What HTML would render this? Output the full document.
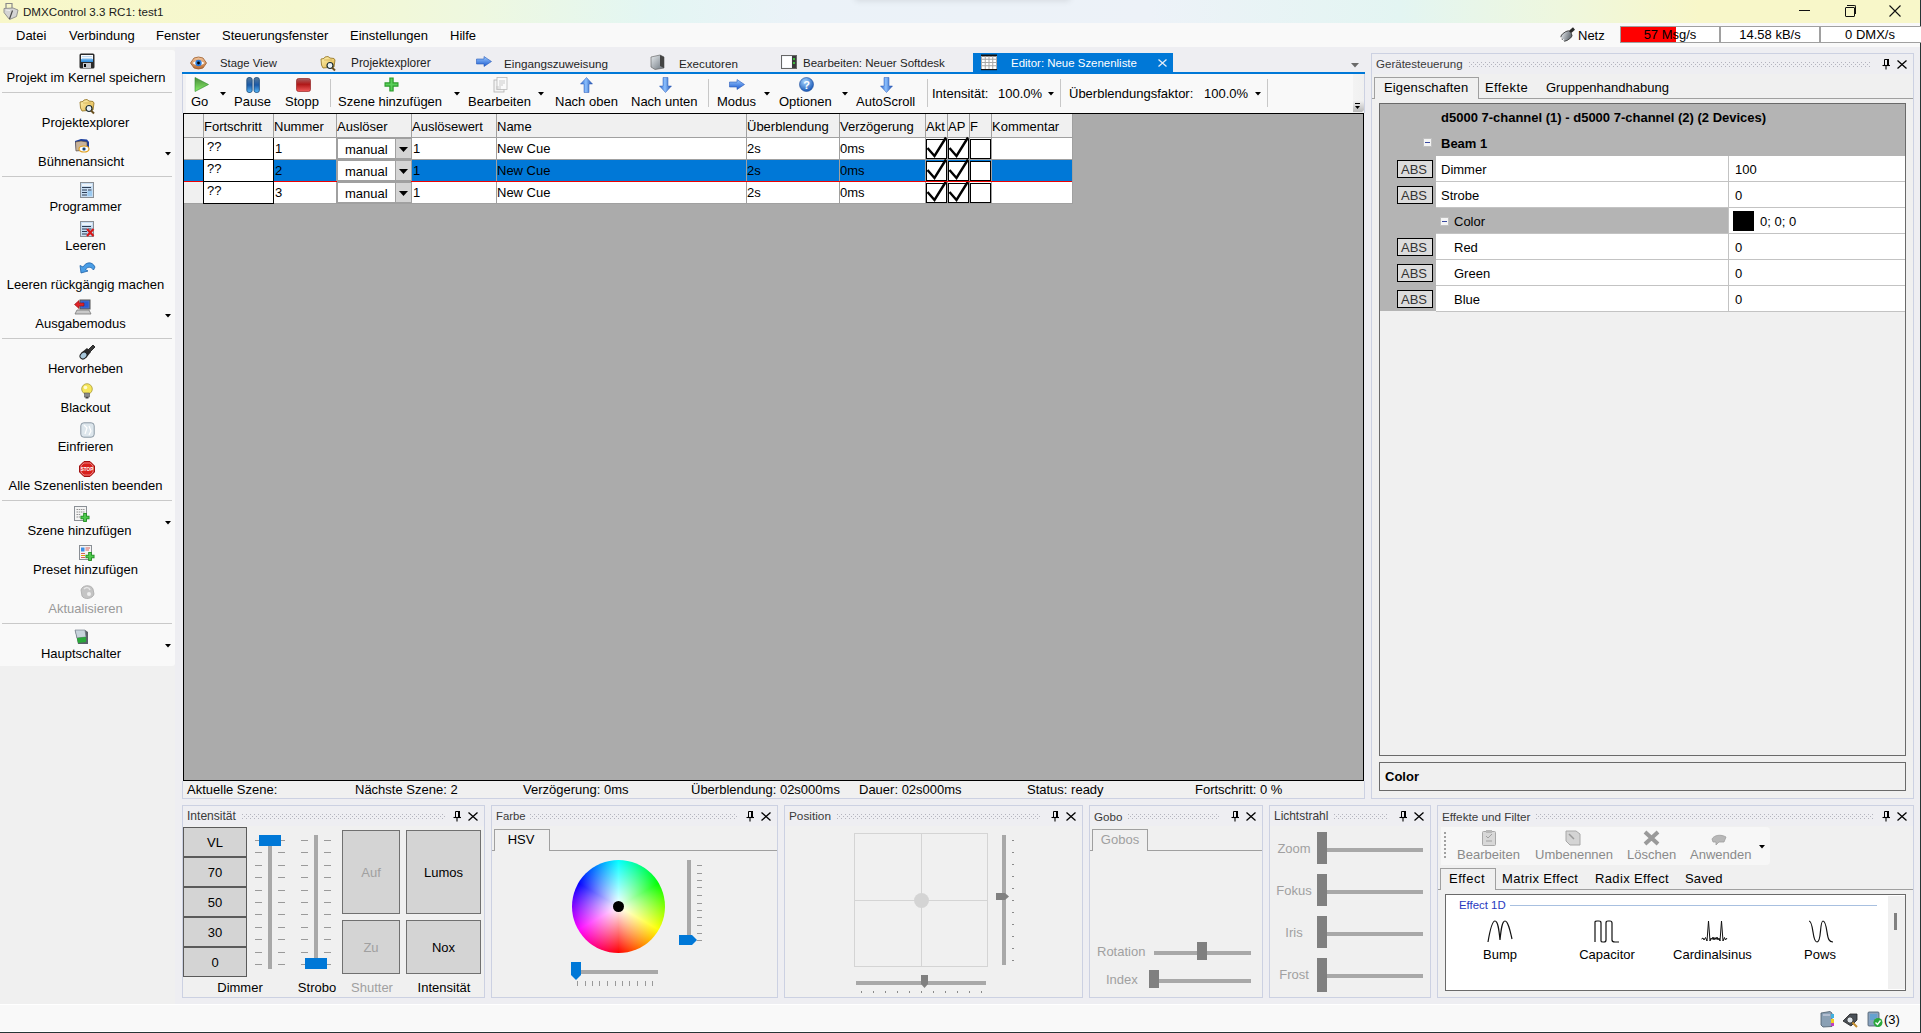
<!DOCTYPE html>
<html><head><meta charset="utf-8">
<style>
html,body{margin:0;padding:0}
body{width:1921px;height:1033px;position:relative;overflow:hidden;background:#eeeef2;font-family:"Liberation Sans",sans-serif;font-size:13px;color:#000}
.a{position:absolute}
svg.a{overflow:visible}
.t{position:absolute;white-space:nowrap;line-height:15px;font-size:13px}
.c{text-align:center}
.g{color:#a0a0a0}
</style></head>
<body>
<div class="a" style="left:0px;top:0px;width:1920px;height:23px;background:linear-gradient(90deg,#f8f7c9 0px,#f5f8d0 300px,#eef8e0 480px,#e3f6f3 650px,#ebf2f8 800px,#edf2f8 1150px,#e3f5f2 1400px,#eef7de 1560px,#f8f7c9 1700px,#f8f7c9 1921px)"></div>
<div class="a" style="left:855px;top:-12px;width:215px;height:12px;box-shadow:0 1px 6px rgba(0,0,0,0.1);background:#e8ecf0"></div>
<div class="a" style="left:0px;top:23px;width:1920px;height:24px;background:#f9f9f9"></div>
<div class="a" style="left:0px;top:47px;width:175px;height:957px;background:#f0f0f0"></div>
<div class="a" style="left:0px;top:50px;width:175px;height:616px;background:#f9f9f9;border-radius:0 3px 3px 0"></div>
<div class="a" style="left:0px;top:1004px;width:1920px;height:1px;background:#fff"></div>
<div class="a" style="left:0px;top:1005px;width:1920px;height:26px;background:#f9f9f9"></div>
<div class="a" style="left:0px;top:1031px;width:1920px;height:1px;background:#fff"></div>
<div class="a" style="left:0px;top:1032px;width:1921px;height:1px;background:#263535"></div>
<div class="a" style="left:1920px;top:0px;width:1px;height:1033px;background:#263535"></div>
<svg class="a" style="left:1px;top:1px" width="18" height="18" viewBox="0 0 18 18"><path d="M5 7 V2.5 H11 V7" fill="none" stroke="#8a8a8a" stroke-width="1.2"/><path d="M3 7.5 L12 7 L17 9 L15.5 15.5 L8.5 18.5 L3 11.5 Z" fill="#d4d4d4" stroke="#8a8a8a" stroke-width="0.9"/><path d="M11.5 9.5 L8.5 18" stroke="#4a4a4a" stroke-width="1.2"/><path d="M5 9 L9 9.5" stroke="#f0f0f0" stroke-width="1"/></svg>
<div class="t" style="left:23px;top:4px;font-size:11.6px;color:#1a1a1a">DMXControl 3.3 RC1: test1</div>
<div class="a" style="left:1799px;top:10px;width:11px;height:1px;background:#111"></div>
<div class="a" style="left:1845px;top:7px;width:8px;height:8px;border:1px solid #111;border-radius:1px"></div>
<div class="a" style="left:1847px;top:5px;width:8px;height:8px;border-top:1px solid #111;border-right:1px solid #111;border-radius:0 2px 0 0"></div>
<svg class="a" style="left:1889px;top:5px" width="12" height="12" viewBox="0 0 12 12"><path d="M0.5 0.5 L11.5 11.5 M11.5 0.5 L0.5 11.5" stroke="#111" stroke-width="1.1"/></svg>
<div class="t" style="left:16px;top:28px;">Datei</div>
<div class="t" style="left:69px;top:28px;">Verbindung</div>
<div class="t" style="left:156px;top:28px;">Fenster</div>
<div class="t" style="left:222px;top:28px;">Steuerungsfenster</div>
<div class="t" style="left:350px;top:28px;">Einstellungen</div>
<div class="t" style="left:450px;top:28px;">Hilfe</div>
<svg class="a" style="left:1558px;top:27px" width="18" height="16" viewBox="0 0 18 16"><defs><linearGradient id="plg" x1="0" y1="0" x2="1" y2="1"><stop offset="0" stop-color="#e8ecf0"/><stop offset="1" stop-color="#4a525a"/></linearGradient></defs><path d="M12 5 L16 1.5" stroke="#2a2a2a" stroke-width="3"/><rect x="3" y="5" width="11" height="8" rx="3.5" transform="rotate(-35 8.5 9)" fill="url(#plg)" stroke="#3a3a3a" stroke-width="0.8"/><path d="M1.5 12.5 L4 10.5 M3.5 14.5 L6 12.5" stroke="#fff" stroke-width="1.3"/></svg>
<div class="t" style="left:1578px;top:28px;">Netz</div>
<div class="a" style="left:1620px;top:26px;width:100px;height:17px;box-sizing:border-box;border:1px solid #a0a0a0;background:#fff"></div>
<div class="a" style="left:1621px;top:27px;width:55px;height:15px;background:#f00"></div>
<div class="t c" style="left:1620.0px;top:27px;width:100px;">57 Msg/s</div>
<div class="a" style="left:1720px;top:26px;width:100px;height:17px;box-sizing:border-box;border:1px solid #a0a0a0;background:#fff"></div>
<div class="t c" style="left:1720.0px;top:27px;width:100px;">14.58 kB/s</div>
<div class="a" style="left:1820px;top:26px;width:101px;height:17px;box-sizing:border-box;border:1px solid #a0a0a0;border-right:0;background:#fff"></div>
<div class="t c" style="left:1820.0px;top:27px;width:100px;">0 DMX/s</div>
<div class="a" style="left:2px;top:92px;width:170px;height:1px;background:#c9c9c9"></div>
<div class="a" style="left:2px;top:176px;width:170px;height:1px;background:#c9c9c9"></div>
<div class="a" style="left:2px;top:338px;width:170px;height:1px;background:#c9c9c9"></div>
<div class="a" style="left:2px;top:500px;width:170px;height:1px;background:#c9c9c9"></div>
<div class="a" style="left:2px;top:623px;width:170px;height:1px;background:#c9c9c9"></div>
<div class="t c" style="left:-4.0px;top:70px;width:180px;">Projekt im Kernel speichern</div>
<svg class="a" style="left:79px;top:53px" width="16" height="16" viewBox="0 0 16 16"><defs><linearGradient id="flb" x1="0" y1="0" x2="0" y2="1"><stop offset="0" stop-color="#fff"/><stop offset="0.6" stop-color="#e6f0fa"/><stop offset="0.62" stop-color="#6ab4f0"/><stop offset="1" stop-color="#2a88d8"/></linearGradient></defs><rect x="0.5" y="0.5" width="15" height="15" rx="1.5" fill="#2b2b2b"/><rect x="2" y="2" width="12" height="7" fill="url(#flb)"/><rect x="3" y="3" width="10" height="1" fill="#bcd6ee"/><rect x="3" y="5" width="10" height="1" fill="#bcd6ee"/><rect x="4" y="10" width="8" height="5" fill="#c8cacd"/><rect x="5" y="11" width="2" height="3" fill="#000"/></svg>
<div class="t c" style="left:-4.5px;top:115px;width:180px;">Projektexplorer</div>
<svg class="a" style="left:79px;top:98px" width="17" height="16" viewBox="0 0 17 16"><defs><linearGradient id="fdy" x1="0" y1="0" x2="1" y2="1"><stop offset="0" stop-color="#fff6b8"/><stop offset="1" stop-color="#e0b040"/></linearGradient></defs><path d="M1 4 L4 3.5 L5 2 L8 1.5 L10 3 L14 3.5 L15 5 L14 12 L3 13 L1.5 10 Z" fill="url(#fdy)" stroke="#9a7a2a" stroke-width="0.9"/><path d="M4 5 H12" stroke="#c8a040" stroke-width="0.6"/><circle cx="10" cy="10.5" r="3" fill="#e8f0f4" stroke="#1a2a30" stroke-width="1.2"/><path d="M12 12.5 L15 15.5" stroke="#6a5020" stroke-width="2"/></svg>
<div class="t c" style="left:-9.0px;top:154px;width:180px;">Bühnenansicht</div>
<svg class="a" style="left:165px;top:152px" width="6" height="4" viewBox="0 0 6 4"><path d="M0 0 L6 0 L3 3.5 Z" fill="#000"/></svg>
<svg class="a" style="left:74px;top:138px" width="16" height="15" viewBox="0 0 16 15"><path d="M1 3 L7 1 L13 1.5 L15 4 L15 12 L2 13 Z" fill="#1b3e9e"/><path d="M1.5 4 L7 3 L13 4 L13 12 L2 13 Z" fill="#c9b49a" stroke="#5a4a3a" stroke-width="0.6"/><ellipse cx="10" cy="11" rx="5" ry="3" fill="#fff" stroke="#e0a020" stroke-width="1.2"/><circle cx="10" cy="11" r="1.8" fill="#3a78b8"/><circle cx="10" cy="11" r="0.8" fill="#000"/></svg>
<div class="t c" style="left:-4.5px;top:199px;width:180px;">Programmer</div>
<svg class="a" style="left:80px;top:182px" width="16" height="16" viewBox="0 0 16 16"><rect x="0.5" y="0.5" width="13" height="15" fill="#c7ddf2" stroke="#8a8f95" stroke-width="1"/><rect x="2" y="2" width="10" height="2" fill="#eef4fa"/><path d="M2 5.5 H11 M2 8 H7 M8 8 H11.5 M2 10.5 H7 M2 13 H7" stroke="#2c3d55" stroke-width="1"/><rect x="7.5" y="9" width="4.5" height="5" fill="#9ccaf0"/></svg>
<div class="t c" style="left:-4.5px;top:238px;width:180px;">Leeren</div>
<svg class="a" style="left:80px;top:221px" width="16" height="16" viewBox="0 0 16 16"><rect x="0.5" y="0.5" width="13" height="15" fill="#c7ddf2" stroke="#8a8f95" stroke-width="1"/><rect x="2" y="2" width="10" height="2" fill="#eef4fa"/><path d="M2 5.5 H11 M2 8 H7 M8 8 H11.5 M2 10.5 H7 M2 13 H7" stroke="#2c3d55" stroke-width="1"/><rect x="7.5" y="9" width="4.5" height="5" fill="#9ccaf0"/></svg>
<svg class="a" style="left:80px;top:221px" width="16" height="16" viewBox="0 0 16 16"><path d="M7 8 L13.5 15 M13.5 8 L7 15" stroke="#d81818" stroke-width="2.2"/></svg>
<div class="t c" style="left:-4.5px;top:277px;width:180px;">Leeren rückgängig machen</div>
<svg class="a" style="left:79px;top:261px" width="17" height="13" viewBox="0 0 17 13"><path d="M2 12 L1 4.5 L4 6 C7 1 13 0 16 6 L14.5 9 C12 5.5 8.5 5.5 6.5 8.5 L9 10 Z" fill="#4a9ee6" stroke="#1f62a8" stroke-width="0.8"/></svg>
<div class="t c" style="left:-9.5px;top:316px;width:180px;">Ausgabemodus</div>
<svg class="a" style="left:165px;top:314px" width="6" height="4" viewBox="0 0 6 4"><path d="M0 0 L6 0 L3 3.5 Z" fill="#000"/></svg>
<svg class="a" style="left:74px;top:299px" width="17" height="16" viewBox="0 0 17 16"><rect x="6" y="1" width="10" height="9" fill="#4a70c8" stroke="#555" stroke-width="1"/><rect x="7.5" y="2.5" width="7" height="6" fill="#2a5bd0"/><path d="M3 11 L15 11 L17 15 L1 15 Z" fill="#c9c9c9" stroke="#777" stroke-width="0.8"/><path d="M0.5 5.5 L5 1.5 L5 4 L10 4 L10 7 L5 7 L5 9.5 Z" fill="#e0242a" stroke="#8a1010" stroke-width="0.6"/></svg>
<div class="t c" style="left:-4.5px;top:361px;width:180px;">Hervorheben</div>
<svg class="a" style="left:79px;top:344px" width="17" height="16" viewBox="0 0 17 16"><path d="M9 6 L14 1 L16 3 L11 8 Z" fill="#3a3a3a" stroke="#111" stroke-width="0.8"/><path d="M2 9 L8 4 L12 8 L7 14 Z" fill="#2a2a2a"/><ellipse cx="4.5" cy="11.5" rx="3.8" ry="3" transform="rotate(-45 4.5 11.5)" fill="#a8c8dc" stroke="#222" stroke-width="1"/></svg>
<div class="t c" style="left:-4.5px;top:400px;width:180px;">Blackout</div>
<svg class="a" style="left:81px;top:383px" width="12" height="16" viewBox="0 0 12 16"><circle cx="6" cy="6" r="5.3" fill="#f6e65a" stroke="#a89a3a" stroke-width="0.8"/><circle cx="4.5" cy="4.5" r="1.8" fill="#fffbd0"/><rect x="3.5" y="10" width="5" height="4" fill="#8a8a8a" stroke="#555" stroke-width="0.6"/><rect x="4.5" y="14" width="3" height="1.5" fill="#444"/></svg>
<div class="t c" style="left:-4.5px;top:439px;width:180px;">Einfrieren</div>
<svg class="a" style="left:80px;top:422px" width="15" height="16" viewBox="0 0 15 16"><rect x="0.8" y="0.8" width="13.4" height="14.4" rx="3" fill="#dde6ec" stroke="#8a98a4" stroke-width="1"/><path d="M4 3 L7 6 L5 12 M9 4 L11 9 L9 13" stroke="#fff" stroke-width="1.2" fill="none"/></svg>
<div class="t c" style="left:-4.5px;top:478px;width:180px;">Alle Szenenlisten beenden</div>
<svg class="a" style="left:79px;top:461px" width="16" height="16" viewBox="0 0 16 16"><path d="M5 0.5 L11 0.5 L15.5 5 L15.5 11 L11 15.5 L5 15.5 L0.5 11 L0.5 5 Z" fill="#d8201c" stroke="#a01010" stroke-width="1"/><path d="M5 2 L11 2 L14 5 L14 11 L11 14 L5 14 L2 11 L2 5 Z" fill="none" stroke="#f4c0c0" stroke-width="0.6"/><text x="8" y="10" font-size="4.6" font-family="Liberation Sans" font-weight="bold" fill="#fff" text-anchor="middle">STOP</text></svg>
<div class="t c" style="left:-10.5px;top:523px;width:180px;">Szene hinzufügen</div>
<svg class="a" style="left:165px;top:521px" width="6" height="4" viewBox="0 0 6 4"><path d="M0 0 L6 0 L3 3.5 Z" fill="#000"/></svg>
<svg class="a" style="left:74px;top:506px" width="16" height="16" viewBox="0 0 16 16"><rect x="0.5" y="0.5" width="12" height="14" fill="#f4f4f4" stroke="#8a8f95" stroke-width="1"/><path d="M2.5 3.5 H10.5 M2.5 6 H10.5 M2.5 8.5 H6.5 M2.5 11 H6.5" stroke="#6a6a6a" stroke-width="0.7" stroke-dasharray="1.5 0.7"/><path d="M11 7 V16 M6.5 11.5 H15.5" stroke="#1c8a1c" stroke-width="3.6"/><path d="M11 7.8 V15.2 M7.3 11.5 H14.7" stroke="#4ec84e" stroke-width="2"/></svg>
<div class="t c" style="left:-4.5px;top:562px;width:180px;">Preset hinzufügen</div>
<svg class="a" style="left:79px;top:545px" width="16" height="16" viewBox="0 0 16 16"><rect x="0.5" y="0.5" width="12" height="14" fill="#f4f4f4" stroke="#8a8f95" stroke-width="1"/><rect x="2" y="2.5" width="3.5" height="4" fill="#3a8ee6"/><path d="M6.5 3 H11 M6.5 5 H10 M2 8.5 H6 M2 10.5 H6 M2 12.5 H6" stroke="#d05050" stroke-width="0.9"/><path d="M2 10.5 H6" stroke="#e0a000" stroke-width="0.9"/><path d="M11 7 V16 M6.5 11.5 H15.5" stroke="#1c8a1c" stroke-width="3.6"/><path d="M11 7.8 V15.2 M7.3 11.5 H14.7" stroke="#4ec84e" stroke-width="2"/></svg>
<div class="t c" style="left:-4.5px;top:601px;width:180px;color:#9a9a9a">Aktualisieren</div>
<svg class="a" style="left:79px;top:584px" width="16" height="16" viewBox="0 0 16 16"><path d="M2 6 C3 1 12 0 14 5 L15 10 C14 15 5 16 3 12 Z" fill="#c4c4c4" stroke="#a8a8a8" stroke-width="0.8"/><path d="M5 5 C7 3 10 3 11 6" stroke="#e8e8e8" stroke-width="1.5" fill="none"/><circle cx="10" cy="10" r="2" fill="#eee"/></svg>
<div class="t c" style="left:-9.0px;top:646px;width:180px;">Hauptschalter</div>
<svg class="a" style="left:165px;top:644px" width="6" height="4" viewBox="0 0 6 4"><path d="M0 0 L6 0 L3 3.5 Z" fill="#000"/></svg>
<svg class="a" style="left:74px;top:629px" width="15" height="16" viewBox="0 0 15 16"><path d="M1 1 L11 1 L14 3 L14 15 L4 15 Z" fill="#5a6068"/><path d="M1 1 L11 1 L12 8 L3 9 Z" fill="#c8d4dc" stroke="#6a7480" stroke-width="0.6"/><path d="M3 9 L12 8 L12 13 L4 14 Z" fill="#2aa83a"/></svg>
<div class="a" style="left:175px;top:47px;width:8px;height:957px;background:#eeeef2"></div>
<svg class="a" style="left:190px;top:56px" width="17" height="14" viewBox="0 0 17 14"><defs><linearGradient id="eyl" x1="0" y1="0" x2="0" y2="1"><stop offset="0" stop-color="#f4c8a0"/><stop offset="1" stop-color="#b86a30"/></linearGradient></defs><path d="M0.5 7 L4 2 Q8.5 0 13 2 L16.5 7 L13 12 Q8.5 14 4 12 Z" fill="url(#eyl)" stroke="#9a5a2a" stroke-width="0.8"/><path d="M2.5 7 Q8.5 2 14.5 7 Q8.5 12 2.5 7 Z" fill="#fff"/><circle cx="8.5" cy="7" r="3.2" fill="#2a7ad8"/><circle cx="8.5" cy="7" r="1.4" fill="#000"/></svg>
<div class="t" style="left:220px;top:56px;font-size:11.3px;color:#1e1e1e">Stage View</div>
<svg class="a" style="left:320px;top:55px" width="17" height="16" viewBox="0 0 17 16"><defs><linearGradient id="fdy" x1="0" y1="0" x2="1" y2="1"><stop offset="0" stop-color="#fff6b8"/><stop offset="1" stop-color="#e0b040"/></linearGradient></defs><path d="M1 4 L4 3.5 L5 2 L8 1.5 L10 3 L14 3.5 L15 5 L14 12 L3 13 L1.5 10 Z" fill="url(#fdy)" stroke="#9a7a2a" stroke-width="0.9"/><path d="M4 5 H12" stroke="#c8a040" stroke-width="0.6"/><circle cx="10" cy="10.5" r="3" fill="#e8f0f4" stroke="#1a2a30" stroke-width="1.2"/><path d="M12 12.5 L15 15.5" stroke="#6a5020" stroke-width="2"/></svg>
<div class="t" style="left:351px;top:56px;font-size:11.85px;color:#1e1e1e">Projektexplorer</div>
<svg class="a" style="left:476px;top:56px" width="16" height="11" viewBox="0 0 16 11"><defs><linearGradient id="arb" x1="0" y1="0" x2="0" y2="1"><stop offset="0" stop-color="#9ccaff"/><stop offset="1" stop-color="#1a5ad0"/></linearGradient></defs><path d="M0.5 3 L8 3 L8 0.5 L15.5 5.5 L8 10.5 L8 8 L0.5 8 Z" fill="url(#arb)" stroke="#2a5ab8" stroke-width="0.6"/></svg>
<div class="t" style="left:504px;top:56px;font-size:11.7px;color:#1e1e1e">Eingangszuweisung</div>
<svg class="a" style="left:650px;top:54px" width="15" height="16" viewBox="0 0 15 16"><defs><linearGradient id="cub" x1="0" y1="0" x2="1" y2="1"><stop offset="0" stop-color="#e8ecef"/><stop offset="1" stop-color="#6a737c"/></linearGradient></defs><path d="M1 3 L10 1 L14 3 L14 14 L5 15.5 L1 13 Z" fill="url(#cub)" stroke="#555" stroke-width="0.6"/><path d="M10 1 L14 3 L14 14 L10 12 Z" fill="#444"/></svg>
<div class="t" style="left:679px;top:56px;font-size:11.65px;color:#1e1e1e">Executoren</div>
<svg class="a" style="left:781px;top:54px" width="16" height="16" viewBox="0 0 16 16"><rect x="0.5" y="1.5" width="15" height="13" fill="#e8eef4" stroke="#666" stroke-width="1"/><rect x="1.5" y="2.5" width="9" height="11" fill="#fff"/><rect x="11" y="2" width="4" height="12" fill="#3a3a3a"/><rect x="12" y="4" width="2" height="2" fill="#3cba3c"/><rect x="12" y="8" width="2" height="2" fill="#3cba3c"/></svg>
<div class="t" style="left:803px;top:56px;font-size:11.55px;color:#1e1e1e">Bearbeiten: Neuer Softdesk</div>
<div class="a" style="left:973px;top:53px;width:200px;height:20px;background:#0078d7"></div>
<svg class="a" style="left:981px;top:54px" width="16" height="16" viewBox="0 0 16 16"><rect x="0" y="1" width="16" height="15" fill="#fff"/><rect x="0" y="0.5" width="16" height="2" fill="#111"/><rect x="0" y="15" width="16" height="1.2" fill="#111"/><rect x="0.0" y="2" width="1" height="13" fill="#a8a8a8"/><rect x="3.75" y="2" width="1" height="13" fill="#a8a8a8"/><rect x="7.5" y="2" width="1" height="13" fill="#a8a8a8"/><rect x="11.25" y="2" width="1" height="13" fill="#a8a8a8"/><rect x="15.0" y="2" width="1" height="13" fill="#a8a8a8"/><rect x="0" y="4.75" width="16" height="1" fill="#a8a8a8"/><rect x="0" y="8.0" width="16" height="1" fill="#a8a8a8"/><rect x="0" y="11.25" width="16" height="1" fill="#a8a8a8"/></svg>
<div class="t" style="left:1011px;top:56px;font-size:11.45px;color:#fff">Editor: Neue Szenenliste</div>
<svg class="a" style="left:1158px;top:59px" width="9" height="8" viewBox="0 0 9 8"><path d="M0.5 0.5 L8.5 7.5 M8.5 0.5 L0.5 7.5" stroke="#e4ecf8" stroke-width="1.3"/></svg>
<svg class="a" style="left:1351px;top:63px" width="9" height="5" viewBox="0 0 9 5"><path d="M0 0 L8 0 L4 4.5 Z" fill="#6a6a6a"/></svg>
<div class="a" style="left:182px;top:72px;width:1183px;height:2px;background:#0078d7"></div>
<div class="a" style="left:183px;top:74px;width:1181px;height:39px;background:#f9f9f9"></div>
<div class="a" style="left:182px;top:74px;width:1px;height:39px;background:#ccd1e2"></div>
<div class="a" style="left:183px;top:75px;width:3px;height:38px;background:#f1f1f3"></div>
<div class="a" style="left:1353px;top:74px;width:11px;height:39px;background:linear-gradient(90deg,#f3f3f3,#f0f0f0)"></div>
<div class="a" style="left:1364px;top:74px;width:1px;height:39px;background:#ccd1e2"></div>
<svg class="a" style="left:1353px;top:101px" width="11" height="11" viewBox="0 0 11 11"><defs><linearGradient id="ovf" x1="0" y1="0" x2="0" y2="1"><stop offset="0" stop-color="#f0f0f0"/><stop offset="1" stop-color="#b8b8b8"/></linearGradient></defs><path d="M0 0 H11 V9 L9 11 H0 Z" fill="url(#ovf)"/><path d="M2 2.5 H7" stroke="#000" stroke-width="1"/><path d="M2 5 L7 5 L4.5 8 Z" fill="#000"/></svg>
<svg class="a" style="left:194px;top:77px" width="15" height="15" viewBox="0 0 15 15"><defs><linearGradient id="gog" x1="0" y1="0" x2="0" y2="1"><stop offset="0" stop-color="#4a8a3a"/><stop offset="1" stop-color="#86f068"/></linearGradient></defs><path d="M1 0.5 L14.5 7.5 L1 14.5 Z" fill="url(#gog)" stroke="#2a8a2a" stroke-width="0.6"/></svg>
<div class="t" style="left:191px;top:94px;">Go</div>
<svg class="a" style="left:220px;top:92px" width="6" height="4" viewBox="0 0 6 4"><path d="M0 0 L6 0 L3 3.5 Z" fill="#000"/></svg>
<svg class="a" style="left:246px;top:77px" width="14" height="15" viewBox="0 0 14 15"><defs><linearGradient id="pab" x1="0" y1="0" x2="0" y2="1"><stop offset="0" stop-color="#5a7a98"/><stop offset="0.5" stop-color="#1a5aa8"/><stop offset="1" stop-color="#58b8f8"/></linearGradient></defs><rect x="0.8" y="0.5" width="5.4" height="15" rx="2.2" fill="url(#pab)" stroke="#1a4a7a" stroke-width="0.8"/><rect x="8" y="0.5" width="5.4" height="15" rx="2.2" fill="url(#pab)" stroke="#1a4a7a" stroke-width="0.8"/></svg>
<div class="t" style="left:234px;top:94px;">Pause</div>
<svg class="a" style="left:296px;top:78px" width="15" height="14" viewBox="0 0 15 14"><defs><linearGradient id="stq" x1="0" y1="0" x2="0" y2="1"><stop offset="0" stop-color="#a86060"/><stop offset="0.45" stop-color="#b01818"/><stop offset="1" stop-color="#f05a5a"/></linearGradient></defs><rect x="0.5" y="0.5" width="14" height="13" rx="2" fill="url(#stq)" stroke="#8a1010" stroke-width="0.6"/></svg>
<div class="t" style="left:285px;top:94px;">Stopp</div>
<div class="a" style="left:330px;top:79px;width:1px;height:28px;background:#c8c8c8"></div>
<svg class="a" style="left:384px;top:77px" width="15" height="15" viewBox="0 0 15 15"><path d="M7.5 0.5 V14.5 M0.5 7.5 H14.5" stroke="#2a9a2a" stroke-width="4.4"/><path d="M7.5 1.5 V13.5 M1.5 7.5 H13.5" stroke="#5ad05a" stroke-width="2"/></svg>
<div class="t" style="left:338px;top:94px;">Szene hinzufügen</div>
<svg class="a" style="left:454px;top:92px" width="6" height="4" viewBox="0 0 6 4"><path d="M0 0 L6 0 L3 3.5 Z" fill="#000"/></svg>
<svg class="a" style="left:493px;top:77px" width="15" height="16" viewBox="0 0 15 16"><rect x="1" y="3" width="10" height="12" fill="#f4f4f4" stroke="#b0b0b0" stroke-width="0.8"/><rect x="4" y="0.5" width="10" height="12" fill="#fafafa" stroke="#b8b8b8" stroke-width="0.8"/><path d="M6 4 H12 M6 6 H12 M6 8 H10 M3 10 H8 M3 12 H8" stroke="#c0c0c0" stroke-width="0.8"/></svg>
<div class="t" style="left:468px;top:94px;">Bearbeiten</div>
<svg class="a" style="left:538px;top:92px" width="6" height="4" viewBox="0 0 6 4"><path d="M0 0 L6 0 L3 3.5 Z" fill="#000"/></svg>
<svg class="a" style="left:580px;top:77px" width="13" height="16" viewBox="0 0 13 16"><defs><linearGradient id="uab" x1="0" y1="0" x2="1" y2="0"><stop offset="0" stop-color="#2a64c8"/><stop offset="0.45" stop-color="#8cc0ff"/><stop offset="1" stop-color="#1a4aa8"/></linearGradient></defs><path d="M6.5 0.5 L12.5 7 L9 7 L9 15.5 L4 15.5 L4 7 L0.5 7 Z" fill="url(#uab)" stroke="#2a5ab8" stroke-width="0.5"/></svg>
<div class="t" style="left:555px;top:94px;">Nach oben</div>
<svg class="a" style="left:659px;top:77px" width="13" height="16" viewBox="0 0 13 16"><defs><linearGradient id="dab" x1="0" y1="0" x2="1" y2="0"><stop offset="0" stop-color="#2a64c8"/><stop offset="0.45" stop-color="#8cc0ff"/><stop offset="1" stop-color="#1a4aa8"/></linearGradient></defs><path d="M6.5 15.5 L12.5 9 L9 9 L9 0.5 L4 0.5 L4 9 L0.5 9 Z" fill="url(#dab)" stroke="#2a5ab8" stroke-width="0.5"/></svg>
<div class="t" style="left:631px;top:94px;">Nach unten</div>
<div class="a" style="left:708px;top:79px;width:1px;height:28px;background:#c8c8c8"></div>
<svg class="a" style="left:729px;top:79px" width="16" height="11" viewBox="0 0 16 11"><defs><linearGradient id="arb" x1="0" y1="0" x2="0" y2="1"><stop offset="0" stop-color="#9ccaff"/><stop offset="1" stop-color="#1a5ad0"/></linearGradient></defs><path d="M0.5 3 L8 3 L8 0.5 L15.5 5.5 L8 10.5 L8 8 L0.5 8 Z" fill="url(#arb)" stroke="#2a5ab8" stroke-width="0.6"/></svg>
<div class="t" style="left:717px;top:94px;">Modus</div>
<svg class="a" style="left:764px;top:92px" width="6" height="4" viewBox="0 0 6 4"><path d="M0 0 L6 0 L3 3.5 Z" fill="#000"/></svg>
<svg class="a" style="left:799px;top:77px" width="15" height="15" viewBox="0 0 15 15"><defs><radialGradient id="hlp" cx="0.4" cy="0.3" r="0.7"><stop offset="0" stop-color="#a8d4ff"/><stop offset="1" stop-color="#1a5ab8"/></radialGradient></defs><circle cx="7.5" cy="7.5" r="7" fill="url(#hlp)" stroke="#1a4a98" stroke-width="0.6"/><text x="7.5" y="11.5" font-size="11" font-weight="bold" font-family="Liberation Sans" fill="#fff" text-anchor="middle">?</text></svg>
<div class="t" style="left:779px;top:94px;">Optionen</div>
<svg class="a" style="left:842px;top:92px" width="6" height="4" viewBox="0 0 6 4"><path d="M0 0 L6 0 L3 3.5 Z" fill="#000"/></svg>
<svg class="a" style="left:880px;top:77px" width="13" height="16" viewBox="0 0 13 16"><defs><linearGradient id="dab" x1="0" y1="0" x2="1" y2="0"><stop offset="0" stop-color="#2a64c8"/><stop offset="0.45" stop-color="#8cc0ff"/><stop offset="1" stop-color="#1a4aa8"/></linearGradient></defs><path d="M6.5 15.5 L12.5 9 L9 9 L9 0.5 L4 0.5 L4 9 L0.5 9 Z" fill="url(#dab)" stroke="#2a5ab8" stroke-width="0.5"/></svg>
<div class="t" style="left:856px;top:94px;">AutoScroll</div>
<div class="a" style="left:927px;top:79px;width:1px;height:28px;background:#c8c8c8"></div>
<div class="t" style="left:932px;top:86px;">Intensität:</div>
<div class="t" style="left:998px;top:86px;">100.0%</div>
<svg class="a" style="left:1048px;top:92px" width="6" height="4" viewBox="0 0 6 4"><path d="M0 0 L6 0 L3 3.5 Z" fill="#000"/></svg>
<div class="a" style="left:1060px;top:79px;width:1px;height:28px;background:#c8c8c8"></div>
<div class="t" style="left:1069px;top:86px;">Überblendungsfaktor:</div>
<div class="t" style="left:1204px;top:86px;">100.0%</div>
<svg class="a" style="left:1255px;top:92px" width="6" height="4" viewBox="0 0 6 4"><path d="M0 0 L6 0 L3 3.5 Z" fill="#000"/></svg>
<div class="a" style="left:1267px;top:79px;width:1px;height:28px;background:#c8c8c8"></div>
<div class="a" style="left:183px;top:113px;width:1181px;height:668px;background:#ababab;box-sizing:border-box;border:1px solid #000"></div>
<div class="a" style="left:184px;top:114px;width:888px;height:23px;background:#f0f0f0"></div>
<div class="a" style="left:184px;top:137px;width:888px;height:1px;background:#a0a0a0"></div>
<div class="a" style="left:184px;top:138px;width:19px;height:66px;background:#f0f0f0"></div>
<div class="a" style="left:203px;top:114px;width:1px;height:90px;background:#a0a0a0"></div>
<div class="a" style="left:273px;top:114px;width:1px;height:90px;background:#a0a0a0"></div>
<div class="a" style="left:336px;top:114px;width:1px;height:90px;background:#a0a0a0"></div>
<div class="a" style="left:411px;top:114px;width:1px;height:90px;background:#a0a0a0"></div>
<div class="a" style="left:496px;top:114px;width:1px;height:90px;background:#a0a0a0"></div>
<div class="a" style="left:746px;top:114px;width:1px;height:90px;background:#a0a0a0"></div>
<div class="a" style="left:839px;top:114px;width:1px;height:90px;background:#a0a0a0"></div>
<div class="a" style="left:925px;top:114px;width:1px;height:90px;background:#a0a0a0"></div>
<div class="a" style="left:947px;top:114px;width:1px;height:90px;background:#a0a0a0"></div>
<div class="a" style="left:969px;top:114px;width:1px;height:90px;background:#a0a0a0"></div>
<div class="a" style="left:991px;top:114px;width:1px;height:90px;background:#a0a0a0"></div>
<div class="a" style="left:1072px;top:114px;width:1px;height:90px;background:#a0a0a0"></div>
<div class="t" style="left:204px;top:119px;">Fortschritt</div>
<div class="t" style="left:274px;top:119px;">Nummer</div>
<div class="t" style="left:337px;top:119px;">Auslöser</div>
<div class="t" style="left:412px;top:119px;">Auslösewert</div>
<div class="t" style="left:497px;top:119px;">Name</div>
<div class="t" style="left:747px;top:119px;">Überblendung</div>
<div class="t" style="left:840px;top:119px;">Verzögerung</div>
<div class="t" style="left:926px;top:119px;">Akt</div>
<div class="t" style="left:948px;top:119px;">AP</div>
<div class="t" style="left:970px;top:119px;">F</div>
<div class="t" style="left:992px;top:119px;">Kommentar</div>
<div class="a" style="left:204px;top:138px;width:69px;height:21px;background:#fff"></div>
<div class="a" style="left:274px;top:138px;width:62px;height:21px;background:#fff"></div>
<div class="a" style="left:337px;top:138px;width:74px;height:21px;background:#fff"></div>
<div class="a" style="left:412px;top:138px;width:84px;height:21px;background:#fff"></div>
<div class="a" style="left:497px;top:138px;width:249px;height:21px;background:#fff"></div>
<div class="a" style="left:747px;top:138px;width:92px;height:21px;background:#fff"></div>
<div class="a" style="left:840px;top:138px;width:85px;height:21px;background:#fff"></div>
<div class="a" style="left:926px;top:138px;width:21px;height:21px;background:#fff"></div>
<div class="a" style="left:948px;top:138px;width:21px;height:21px;background:#fff"></div>
<div class="a" style="left:970px;top:138px;width:21px;height:21px;background:#fff"></div>
<div class="a" style="left:992px;top:138px;width:80px;height:21px;background:#fff"></div>
<div class="a" style="left:184px;top:159px;width:888px;height:1px;background:#a0a0a0"></div>
<div class="a" style="left:203px;top:138px;width:71px;height:22px;background:#fff;box-sizing:border-box;border:1px solid #000;border-top:0"></div>
<div class="t" style="left:207px;top:139px;">??</div>
<div class="t" style="left:275px;top:141px;">1</div>
<div class="a" style="left:337px;top:138px;width:74px;height:21px;background:#fff;box-sizing:border-box;border:1px solid #a0a0a0"></div>
<div class="a" style="left:395px;top:139px;width:15px;height:19px;background:#d4d4d4;border-left:1px solid #a0a0a0"></div>
<svg class="a" style="left:399px;top:147px" width="9" height="5" viewBox="0 0 9 5"><path d="M0 0 L9 0 L4.5 5 Z" fill="#000"/></svg>
<div class="t" style="left:345px;top:142px;">manual</div>
<div class="t" style="left:413px;top:141px;">1</div>
<div class="t" style="left:497px;top:141px;">New Cue</div>
<div class="t" style="left:747px;top:141px;">2s</div>
<div class="t" style="left:840px;top:141px;">0ms</div>
<div class="a" style="left:926px;top:139px;width:21px;height:20px;background:#fff;box-sizing:border-box;border:1px solid #000"></div>
<div class="a" style="left:948px;top:139px;width:21px;height:20px;background:#fff;box-sizing:border-box;border:1px solid #000"></div>
<div class="a" style="left:970px;top:139px;width:21px;height:20px;background:#fff;box-sizing:border-box;border:1px solid #000"></div>
<svg class="a" style="left:926px;top:137px" width="21" height="22" viewBox="0 0 21 22"><path d="M1.5 11 L8.5 19 L20 0.5" stroke="#000" stroke-width="2.4" fill="none"/></svg>
<svg class="a" style="left:948px;top:137px" width="21" height="22" viewBox="0 0 21 22"><path d="M1.5 11 L8.5 19 L20 0.5" stroke="#000" stroke-width="2.4" fill="none"/></svg>
<div class="a" style="left:204px;top:160px;width:69px;height:21px;background:#0078d7"></div>
<div class="a" style="left:274px;top:160px;width:62px;height:21px;background:#0078d7"></div>
<div class="a" style="left:337px;top:160px;width:74px;height:21px;background:#0078d7"></div>
<div class="a" style="left:412px;top:160px;width:84px;height:21px;background:#0078d7"></div>
<div class="a" style="left:497px;top:160px;width:249px;height:21px;background:#0078d7"></div>
<div class="a" style="left:747px;top:160px;width:92px;height:21px;background:#0078d7"></div>
<div class="a" style="left:840px;top:160px;width:85px;height:21px;background:#0078d7"></div>
<div class="a" style="left:926px;top:160px;width:21px;height:21px;background:#0078d7"></div>
<div class="a" style="left:948px;top:160px;width:21px;height:21px;background:#0078d7"></div>
<div class="a" style="left:970px;top:160px;width:21px;height:21px;background:#0078d7"></div>
<div class="a" style="left:992px;top:160px;width:80px;height:21px;background:#0078d7"></div>
<div class="a" style="left:184px;top:181px;width:888px;height:1px;background:#a0a0a0"></div>
<div class="a" style="left:184px;top:160px;width:19px;height:21px;background:#0078d7"></div>
<div class="a" style="left:203px;top:160px;width:71px;height:22px;background:#fff;box-sizing:border-box;border:1px solid #000;border-top:0"></div>
<div class="t" style="left:207px;top:161px;">??</div>
<div class="t" style="left:275px;top:163px;">2</div>
<div class="a" style="left:337px;top:160px;width:74px;height:21px;background:#fff;box-sizing:border-box;border:1px solid #a0a0a0"></div>
<div class="a" style="left:395px;top:161px;width:15px;height:19px;background:#d4d4d4;border-left:1px solid #a0a0a0"></div>
<svg class="a" style="left:399px;top:169px" width="9" height="5" viewBox="0 0 9 5"><path d="M0 0 L9 0 L4.5 5 Z" fill="#000"/></svg>
<div class="t" style="left:345px;top:164px;">manual</div>
<div class="t" style="left:413px;top:163px;">1</div>
<div class="t" style="left:497px;top:163px;">New Cue</div>
<div class="t" style="left:747px;top:163px;">2s</div>
<div class="t" style="left:840px;top:163px;">0ms</div>
<div class="a" style="left:926px;top:161px;width:21px;height:20px;background:#fff;box-sizing:border-box;border:1px solid #000"></div>
<div class="a" style="left:948px;top:161px;width:21px;height:20px;background:#fff;box-sizing:border-box;border:1px solid #000"></div>
<div class="a" style="left:970px;top:161px;width:21px;height:20px;background:#fff;box-sizing:border-box;border:1px solid #000"></div>
<svg class="a" style="left:926px;top:159px" width="21" height="22" viewBox="0 0 21 22"><path d="M1.5 11 L8.5 19 L20 0.5" stroke="#000" stroke-width="2.4" fill="none"/></svg>
<svg class="a" style="left:948px;top:159px" width="21" height="22" viewBox="0 0 21 22"><path d="M1.5 11 L8.5 19 L20 0.5" stroke="#000" stroke-width="2.4" fill="none"/></svg>
<div class="a" style="left:204px;top:182px;width:69px;height:21px;background:#fff"></div>
<div class="a" style="left:274px;top:182px;width:62px;height:21px;background:#fff"></div>
<div class="a" style="left:337px;top:182px;width:74px;height:21px;background:#fff"></div>
<div class="a" style="left:412px;top:182px;width:84px;height:21px;background:#fff"></div>
<div class="a" style="left:497px;top:182px;width:249px;height:21px;background:#fff"></div>
<div class="a" style="left:747px;top:182px;width:92px;height:21px;background:#fff"></div>
<div class="a" style="left:840px;top:182px;width:85px;height:21px;background:#fff"></div>
<div class="a" style="left:926px;top:182px;width:21px;height:21px;background:#fff"></div>
<div class="a" style="left:948px;top:182px;width:21px;height:21px;background:#fff"></div>
<div class="a" style="left:970px;top:182px;width:21px;height:21px;background:#fff"></div>
<div class="a" style="left:992px;top:182px;width:80px;height:21px;background:#fff"></div>
<div class="a" style="left:184px;top:203px;width:888px;height:1px;background:#a0a0a0"></div>
<div class="a" style="left:203px;top:182px;width:71px;height:22px;background:#fff;box-sizing:border-box;border:1px solid #000;border-top:0"></div>
<div class="t" style="left:207px;top:183px;">??</div>
<div class="t" style="left:275px;top:185px;">3</div>
<div class="a" style="left:337px;top:182px;width:74px;height:21px;background:#fff;box-sizing:border-box;border:1px solid #a0a0a0"></div>
<div class="a" style="left:395px;top:183px;width:15px;height:19px;background:#d4d4d4;border-left:1px solid #a0a0a0"></div>
<svg class="a" style="left:399px;top:191px" width="9" height="5" viewBox="0 0 9 5"><path d="M0 0 L9 0 L4.5 5 Z" fill="#000"/></svg>
<div class="t" style="left:345px;top:186px;">manual</div>
<div class="t" style="left:413px;top:185px;">1</div>
<div class="t" style="left:497px;top:185px;">New Cue</div>
<div class="t" style="left:747px;top:185px;">2s</div>
<div class="t" style="left:840px;top:185px;">0ms</div>
<div class="a" style="left:926px;top:183px;width:21px;height:20px;background:#fff;box-sizing:border-box;border:1px solid #000"></div>
<div class="a" style="left:948px;top:183px;width:21px;height:20px;background:#fff;box-sizing:border-box;border:1px solid #000"></div>
<div class="a" style="left:970px;top:183px;width:21px;height:20px;background:#fff;box-sizing:border-box;border:1px solid #000"></div>
<svg class="a" style="left:926px;top:181px" width="21" height="22" viewBox="0 0 21 22"><path d="M1.5 11 L8.5 19 L20 0.5" stroke="#000" stroke-width="2.4" fill="none"/></svg>
<svg class="a" style="left:948px;top:181px" width="21" height="22" viewBox="0 0 21 22"><path d="M1.5 11 L8.5 19 L20 0.5" stroke="#000" stroke-width="2.4" fill="none"/></svg>
<div class="a" style="left:274px;top:181px;width:63px;height:1px;background:#e00"></div>
<div class="a" style="left:411px;top:181px;width:661px;height:1px;background:#e00"></div>
<div class="a" style="left:184px;top:181px;width:19px;height:1px;background:#e00"></div>
<div class="a" style="left:1371px;top:53px;width:543px;height:746px;box-sizing:border-box;border:1px solid #ccd1e2;background:#f0f0f0"></div>
<div class="a" style="left:1372px;top:54px;width:541px;height:20px;background:#eeeef2"></div>
<div class="t" style="left:1376px;top:56.5px;font-size:11.54px;color:#3a3a3a">Gerätesteuerung</div>
<svg class="a" style="left:1469px;top:62px" width="402" height="5" viewBox="0 0 402 5"><defs><pattern id="gp1469_62" x="0" y="0" width="4" height="4" patternUnits="userSpaceOnUse"><rect x="0" y="0" width="1" height="1" fill="#b4b4be"/><rect x="2" y="2" width="1" height="1" fill="#b4b4be"/></pattern></defs><rect x="0" y="0" width="402" height="5" fill="url(#gp1469_62)"/></svg>
<svg class="a" style="left:1882px;top:58px" width="9" height="12" viewBox="0 0 9 12"><path d="M2.5 7 V1.5 H6 V7" stroke="#000" stroke-width="1" fill="none"/><rect x="5" y="1" width="2" height="6.5" fill="#000"/><path d="M0.5 7.5 H8" stroke="#000" stroke-width="1.1"/><path d="M4 7.5 V11.5" stroke="#000" stroke-width="1.1"/></svg>
<svg class="a" style="left:1897px;top:60px" width="10" height="9" viewBox="0 0 10 9"><path d="M0.5 0.5 L9.5 8.5 M9.5 0.5 L0.5 8.5" stroke="#000" stroke-width="1.3"/></svg>
<div class="a" style="left:1372px;top:98px;width:541px;height:1px;background:#a0a0a0"></div>
<div class="a" style="left:1374px;top:77px;width:105px;height:22px;background:#f0f0f0;box-sizing:border-box;border:1px solid #a0a0a0;border-bottom:0"></div>
<div class="t" style="left:1384px;top:80px;letter-spacing:0.15px">Eigenschaften</div>
<div class="t" style="left:1485px;top:80px;letter-spacing:0.4px">Effekte</div>
<div class="t" style="left:1546px;top:80px;">Gruppenhandhabung</div>
<div class="a" style="left:1379px;top:103px;width:527px;height:653px;box-sizing:border-box;border:1px solid #6a6a6a;background:#f0f0f0"></div>
<div class="a" style="left:1380px;top:104px;width:525px;height:207px;background:#b4b4b4"></div>
<div class="t" style="left:1441px;top:110px;font-weight:bold">d5000 7-channel (1) - d5000 7-channel (2) (2 Devices)</div>
<svg class="a" style="left:1423px;top:138px" width="9" height="9" viewBox="0 0 9 9"><rect x="0.5" y="0.5" width="8" height="8" fill="#f4f4f4" stroke="#bfbfbf" stroke-width="1"/><path d="M2 4.5 H7" stroke="#3a4aa0" stroke-width="1"/></svg>
<div class="t" style="left:1441px;top:136px;font-weight:bold">Beam 1</div>
<div class="a" style="left:1436px;top:156px;width:469px;height:25px;background:#fff"></div>
<div class="a" style="left:1397px;top:160px;width:36px;height:18px;box-sizing:border-box;border:1px solid #000;background:#dcdcdc"></div>
<div class="t" style="left:1401px;top:161.5px;color:#333">ABS</div>
<div class="t" style="left:1441px;top:161.5px;">Dimmer</div>
<div class="t" style="left:1735px;top:161.5px;">100</div>
<div class="a" style="left:1436px;top:181px;width:469px;height:1px;background:#c3c3c3"></div>
<div class="a" style="left:1728px;top:156px;width:1px;height:26px;background:#c3c3c3"></div>
<div class="a" style="left:1436px;top:182px;width:469px;height:25px;background:#fff"></div>
<div class="a" style="left:1397px;top:186px;width:36px;height:18px;box-sizing:border-box;border:1px solid #000;background:#dcdcdc"></div>
<div class="t" style="left:1401px;top:187.5px;color:#333">ABS</div>
<div class="t" style="left:1441px;top:187.5px;">Strobe</div>
<div class="t" style="left:1735px;top:187.5px;">0</div>
<div class="a" style="left:1436px;top:207px;width:469px;height:1px;background:#c3c3c3"></div>
<div class="a" style="left:1728px;top:182px;width:1px;height:26px;background:#c3c3c3"></div>
<div class="a" style="left:1729px;top:208px;width:176px;height:25px;background:#fff"></div>
<svg class="a" style="left:1440px;top:217px" width="9" height="9" viewBox="0 0 9 9"><rect x="0.5" y="0.5" width="8" height="8" fill="#f4f4f4" stroke="#bfbfbf" stroke-width="1"/><path d="M2 4.5 H7" stroke="#3a4aa0" stroke-width="1"/></svg>
<div class="t" style="left:1454px;top:213.5px;">Color</div>
<div class="a" style="left:1733px;top:211px;width:21px;height:20px;background:#000"></div>
<div class="t" style="left:1760px;top:213.5px;">0; 0; 0</div>
<div class="a" style="left:1436px;top:233px;width:469px;height:1px;background:#c3c3c3"></div>
<div class="a" style="left:1728px;top:208px;width:1px;height:26px;background:#c3c3c3"></div>
<div class="a" style="left:1436px;top:234px;width:469px;height:25px;background:#fff"></div>
<div class="a" style="left:1397px;top:238px;width:36px;height:18px;box-sizing:border-box;border:1px solid #000;background:#dcdcdc"></div>
<div class="t" style="left:1401px;top:239.5px;color:#333">ABS</div>
<div class="t" style="left:1454px;top:239.5px;">Red</div>
<div class="t" style="left:1735px;top:239.5px;">0</div>
<div class="a" style="left:1436px;top:259px;width:469px;height:1px;background:#c3c3c3"></div>
<div class="a" style="left:1728px;top:234px;width:1px;height:26px;background:#c3c3c3"></div>
<div class="a" style="left:1436px;top:260px;width:469px;height:25px;background:#fff"></div>
<div class="a" style="left:1397px;top:264px;width:36px;height:18px;box-sizing:border-box;border:1px solid #000;background:#dcdcdc"></div>
<div class="t" style="left:1401px;top:265.5px;color:#333">ABS</div>
<div class="t" style="left:1454px;top:265.5px;">Green</div>
<div class="t" style="left:1735px;top:265.5px;">0</div>
<div class="a" style="left:1436px;top:285px;width:469px;height:1px;background:#c3c3c3"></div>
<div class="a" style="left:1728px;top:260px;width:1px;height:26px;background:#c3c3c3"></div>
<div class="a" style="left:1436px;top:286px;width:469px;height:25px;background:#fff"></div>
<div class="a" style="left:1397px;top:290px;width:36px;height:18px;box-sizing:border-box;border:1px solid #000;background:#dcdcdc"></div>
<div class="t" style="left:1401px;top:291.5px;color:#333">ABS</div>
<div class="t" style="left:1454px;top:291.5px;">Blue</div>
<div class="t" style="left:1735px;top:291.5px;">0</div>
<div class="a" style="left:1436px;top:311px;width:469px;height:1px;background:#c3c3c3"></div>
<div class="a" style="left:1728px;top:286px;width:1px;height:26px;background:#c3c3c3"></div>
<div class="a" style="left:1379px;top:762px;width:527px;height:29px;box-sizing:border-box;border:1px solid #6a6a6a;background:#f0f0f0"></div>
<div class="t" style="left:1385px;top:769px;font-weight:bold">Color</div>
<div class="a" style="left:182px;top:781px;width:1183px;height:18px;box-sizing:border-box;border:1px solid #ccd1e2;border-top:0;background:#f0f0f0"></div>
<div class="t" style="left:187px;top:782px;">Aktuelle Szene:</div>
<div class="t" style="left:355px;top:782px;">Nächste Szene: 2</div>
<div class="t" style="left:523px;top:782px;">Verzögerung: 0ms</div>
<div class="t" style="left:691px;top:782px;">Überblendung: 02s000ms</div>
<div class="t" style="left:859px;top:782px;">Dauer: 02s000ms</div>
<div class="t" style="left:1027px;top:782px;">Status: ready</div>
<div class="t" style="left:1195px;top:782px;">Fortschritt: 0 %</div>
<div class="a" style="left:182px;top:805px;width:303px;height:193px;box-sizing:border-box;border:1px solid #ccd1e2;background:#f0f0f0"></div>
<div class="a" style="left:183px;top:806px;width:301px;height:20px;background:#eeeef2"></div>
<div class="t" style="left:187px;top:808.5px;font-size:12.05px;color:#3a3a3a">Intensität</div>
<svg class="a" style="left:242px;top:814px" width="203" height="5" viewBox="0 0 203 5"><defs><pattern id="gp242_814" x="0" y="0" width="4" height="4" patternUnits="userSpaceOnUse"><rect x="0" y="0" width="1" height="1" fill="#b4b4be"/><rect x="2" y="2" width="1" height="1" fill="#b4b4be"/></pattern></defs><rect x="0" y="0" width="203" height="5" fill="url(#gp242_814)"/></svg>
<svg class="a" style="left:453px;top:810px" width="9" height="12" viewBox="0 0 9 12"><path d="M2.5 7 V1.5 H6 V7" stroke="#000" stroke-width="1" fill="none"/><rect x="5" y="1" width="2" height="6.5" fill="#000"/><path d="M0.5 7.5 H8" stroke="#000" stroke-width="1.1"/><path d="M4 7.5 V11.5" stroke="#000" stroke-width="1.1"/></svg>
<svg class="a" style="left:468px;top:812px" width="10" height="9" viewBox="0 0 10 9"><path d="M0.5 0.5 L9.5 8.5 M9.5 0.5 L0.5 8.5" stroke="#000" stroke-width="1.3"/></svg>
<div class="a" style="left:183px;top:827px;width:64px;height:30px;box-sizing:border-box;border:1px solid #5a5a5a;background:#d4d4d4"></div>
<div class="t c" style="left:185.0px;top:835px;width:60px;">VL</div>
<div class="a" style="left:183px;top:857px;width:64px;height:30px;box-sizing:border-box;border:1px solid #5a5a5a;background:#d4d4d4"></div>
<div class="t c" style="left:185.0px;top:865px;width:60px;">70</div>
<div class="a" style="left:183px;top:887px;width:64px;height:30px;box-sizing:border-box;border:1px solid #5a5a5a;background:#d4d4d4"></div>
<div class="t c" style="left:185.0px;top:895px;width:60px;">50</div>
<div class="a" style="left:183px;top:917px;width:64px;height:30px;box-sizing:border-box;border:1px solid #5a5a5a;background:#d4d4d4"></div>
<div class="t c" style="left:185.0px;top:925px;width:60px;">30</div>
<div class="a" style="left:183px;top:947px;width:64px;height:30px;box-sizing:border-box;border:1px solid #5a5a5a;background:#d4d4d4"></div>
<div class="t c" style="left:185.0px;top:955px;width:60px;">0</div>
<div class="a" style="left:268px;top:840px;width:4px;height:129px;background:#a8a8a8"></div>
<div class="a" style="left:255px;top:840px;width:7px;height:1px;background:#9a9a9a"></div>
<div class="a" style="left:278px;top:840px;width:7px;height:1px;background:#9a9a9a"></div>
<div class="a" style="left:255px;top:852px;width:7px;height:1px;background:#9a9a9a"></div>
<div class="a" style="left:278px;top:852px;width:7px;height:1px;background:#9a9a9a"></div>
<div class="a" style="left:255px;top:865px;width:7px;height:1px;background:#9a9a9a"></div>
<div class="a" style="left:278px;top:865px;width:7px;height:1px;background:#9a9a9a"></div>
<div class="a" style="left:255px;top:877px;width:7px;height:1px;background:#9a9a9a"></div>
<div class="a" style="left:278px;top:877px;width:7px;height:1px;background:#9a9a9a"></div>
<div class="a" style="left:255px;top:890px;width:7px;height:1px;background:#9a9a9a"></div>
<div class="a" style="left:278px;top:890px;width:7px;height:1px;background:#9a9a9a"></div>
<div class="a" style="left:255px;top:902px;width:7px;height:1px;background:#9a9a9a"></div>
<div class="a" style="left:278px;top:902px;width:7px;height:1px;background:#9a9a9a"></div>
<div class="a" style="left:255px;top:914px;width:7px;height:1px;background:#9a9a9a"></div>
<div class="a" style="left:278px;top:914px;width:7px;height:1px;background:#9a9a9a"></div>
<div class="a" style="left:255px;top:927px;width:7px;height:1px;background:#9a9a9a"></div>
<div class="a" style="left:278px;top:927px;width:7px;height:1px;background:#9a9a9a"></div>
<div class="a" style="left:255px;top:939px;width:7px;height:1px;background:#9a9a9a"></div>
<div class="a" style="left:278px;top:939px;width:7px;height:1px;background:#9a9a9a"></div>
<div class="a" style="left:255px;top:952px;width:7px;height:1px;background:#9a9a9a"></div>
<div class="a" style="left:278px;top:952px;width:7px;height:1px;background:#9a9a9a"></div>
<div class="a" style="left:255px;top:964px;width:7px;height:1px;background:#9a9a9a"></div>
<div class="a" style="left:278px;top:964px;width:7px;height:1px;background:#9a9a9a"></div>
<div class="a" style="left:259px;top:835px;width:22px;height:11px;background:#0078d7"></div>
<div class="a" style="left:314px;top:835px;width:4px;height:134px;background:#a8a8a8"></div>
<div class="a" style="left:301px;top:840px;width:7px;height:1px;background:#9a9a9a"></div>
<div class="a" style="left:324px;top:840px;width:7px;height:1px;background:#9a9a9a"></div>
<div class="a" style="left:301px;top:852px;width:7px;height:1px;background:#9a9a9a"></div>
<div class="a" style="left:324px;top:852px;width:7px;height:1px;background:#9a9a9a"></div>
<div class="a" style="left:301px;top:865px;width:7px;height:1px;background:#9a9a9a"></div>
<div class="a" style="left:324px;top:865px;width:7px;height:1px;background:#9a9a9a"></div>
<div class="a" style="left:301px;top:877px;width:7px;height:1px;background:#9a9a9a"></div>
<div class="a" style="left:324px;top:877px;width:7px;height:1px;background:#9a9a9a"></div>
<div class="a" style="left:301px;top:890px;width:7px;height:1px;background:#9a9a9a"></div>
<div class="a" style="left:324px;top:890px;width:7px;height:1px;background:#9a9a9a"></div>
<div class="a" style="left:301px;top:902px;width:7px;height:1px;background:#9a9a9a"></div>
<div class="a" style="left:324px;top:902px;width:7px;height:1px;background:#9a9a9a"></div>
<div class="a" style="left:301px;top:914px;width:7px;height:1px;background:#9a9a9a"></div>
<div class="a" style="left:324px;top:914px;width:7px;height:1px;background:#9a9a9a"></div>
<div class="a" style="left:301px;top:927px;width:7px;height:1px;background:#9a9a9a"></div>
<div class="a" style="left:324px;top:927px;width:7px;height:1px;background:#9a9a9a"></div>
<div class="a" style="left:301px;top:939px;width:7px;height:1px;background:#9a9a9a"></div>
<div class="a" style="left:324px;top:939px;width:7px;height:1px;background:#9a9a9a"></div>
<div class="a" style="left:301px;top:952px;width:7px;height:1px;background:#9a9a9a"></div>
<div class="a" style="left:324px;top:952px;width:7px;height:1px;background:#9a9a9a"></div>
<div class="a" style="left:301px;top:964px;width:7px;height:1px;background:#9a9a9a"></div>
<div class="a" style="left:324px;top:964px;width:7px;height:1px;background:#9a9a9a"></div>
<div class="a" style="left:305px;top:958px;width:22px;height:11px;background:#0078d7"></div>
<div class="a" style="left:342px;top:830px;width:58px;height:84px;box-sizing:border-box;border:1px solid #707070;background:#d4d4d4"></div>
<div class="t c" style="left:342.0px;top:865px;width:58px;color:#a0a0a0">Auf</div>
<div class="a" style="left:406px;top:830px;width:75px;height:84px;box-sizing:border-box;border:1px solid #707070;background:#d4d4d4"></div>
<div class="t c" style="left:406.0px;top:865px;width:75px;">Lumos</div>
<div class="a" style="left:342px;top:920px;width:58px;height:54px;box-sizing:border-box;border:1px solid #707070;background:#d4d4d4"></div>
<div class="t c" style="left:342.0px;top:940px;width:58px;color:#a0a0a0">Zu</div>
<div class="a" style="left:406px;top:920px;width:75px;height:54px;box-sizing:border-box;border:1px solid #707070;background:#d4d4d4"></div>
<div class="t c" style="left:406.0px;top:940px;width:75px;">Nox</div>
<div class="t c" style="left:200.0px;top:980px;width:80px;">Dimmer</div>
<div class="t c" style="left:277.0px;top:980px;width:80px;">Strobo</div>
<div class="t c" style="left:332.0px;top:980px;width:80px;color:#a0a0a0">Shutter</div>
<div class="t c" style="left:404.0px;top:980px;width:80px;">Intensität</div>
<div class="a" style="left:491px;top:805px;width:287px;height:193px;box-sizing:border-box;border:1px solid #ccd1e2;background:#f0f0f0"></div>
<div class="a" style="left:492px;top:806px;width:285px;height:20px;background:#eeeef2"></div>
<div class="t" style="left:496px;top:808.5px;font-size:11.3px;color:#3a3a3a">Farbe</div>
<svg class="a" style="left:530px;top:814px" width="208" height="5" viewBox="0 0 208 5"><defs><pattern id="gp530_814" x="0" y="0" width="4" height="4" patternUnits="userSpaceOnUse"><rect x="0" y="0" width="1" height="1" fill="#b4b4be"/><rect x="2" y="2" width="1" height="1" fill="#b4b4be"/></pattern></defs><rect x="0" y="0" width="208" height="5" fill="url(#gp530_814)"/></svg>
<svg class="a" style="left:746px;top:810px" width="9" height="12" viewBox="0 0 9 12"><path d="M2.5 7 V1.5 H6 V7" stroke="#000" stroke-width="1" fill="none"/><rect x="5" y="1" width="2" height="6.5" fill="#000"/><path d="M0.5 7.5 H8" stroke="#000" stroke-width="1.1"/><path d="M4 7.5 V11.5" stroke="#000" stroke-width="1.1"/></svg>
<svg class="a" style="left:761px;top:812px" width="10" height="9" viewBox="0 0 10 9"><path d="M0.5 0.5 L9.5 8.5 M9.5 0.5 L0.5 8.5" stroke="#000" stroke-width="1.3"/></svg>
<div class="a" style="left:492px;top:850px;width:285px;height:1px;background:#a0a0a0"></div>
<div class="a" style="left:494px;top:829px;width:56px;height:22px;background:#f0f0f0;box-sizing:border-box;border:1px solid #a0a0a0;border-bottom:0"></div>
<div class="t c" style="left:493.0px;top:832px;width:56px;">HSV</div>
<div class="a" style="left:572px;top:860px;width:93px;height:93px;border-radius:50%;background:conic-gradient(from 0deg,#00ffff,#00ff00 60deg,#ffff00 120deg,#ff0000 180deg,#ff00ff 240deg,#0000ff 300deg,#00ffff 360deg)"></div>
<div class="a" style="left:572px;top:860px;width:93px;height:93px;border-radius:50%;background:radial-gradient(circle closest-side,rgba(255,255,255,1) 0%,rgba(255,255,255,0) 100%)"></div>
<div class="a" style="left:613px;top:901px;width:11px;height:11px;border-radius:50%;background:#000"></div>
<div class="a" style="left:687px;top:860px;width:4px;height:76px;background:#a8a8a8"></div>
<div class="a" style="left:697px;top:865px;width:5px;height:1px;background:#9a9a9a"></div>
<div class="a" style="left:697px;top:873px;width:5px;height:1px;background:#9a9a9a"></div>
<div class="a" style="left:697px;top:880px;width:5px;height:1px;background:#9a9a9a"></div>
<div class="a" style="left:697px;top:887px;width:5px;height:1px;background:#9a9a9a"></div>
<div class="a" style="left:697px;top:895px;width:5px;height:1px;background:#9a9a9a"></div>
<div class="a" style="left:697px;top:903px;width:5px;height:1px;background:#9a9a9a"></div>
<div class="a" style="left:697px;top:910px;width:5px;height:1px;background:#9a9a9a"></div>
<div class="a" style="left:697px;top:917px;width:5px;height:1px;background:#9a9a9a"></div>
<div class="a" style="left:697px;top:925px;width:5px;height:1px;background:#9a9a9a"></div>
<div class="a" style="left:697px;top:933px;width:5px;height:1px;background:#9a9a9a"></div>
<div class="a" style="left:697px;top:940px;width:5px;height:1px;background:#9a9a9a"></div>
<svg class="a" style="left:679px;top:935px" width="19" height="11" viewBox="0 0 19 11"><path d="M0 0 H13 L18 5 L13 10 H0 Z" fill="#0078d7"/></svg>
<div class="a" style="left:574px;top:970px;width:84px;height:4px;background:#a8a8a8"></div>
<svg class="a" style="left:571px;top:962px" width="11" height="18" viewBox="0 0 11 18"><path d="M0 0 H10 V13 L5 18 L0 13 Z" fill="#0078d7"/></svg>
<div class="a" style="left:577px;top:981px;width:1px;height:5px;background:#9a9a9a"></div>
<div class="a" style="left:585px;top:981px;width:1px;height:5px;background:#9a9a9a"></div>
<div class="a" style="left:592px;top:981px;width:1px;height:5px;background:#9a9a9a"></div>
<div class="a" style="left:599px;top:981px;width:1px;height:5px;background:#9a9a9a"></div>
<div class="a" style="left:607px;top:981px;width:1px;height:5px;background:#9a9a9a"></div>
<div class="a" style="left:615px;top:981px;width:1px;height:5px;background:#9a9a9a"></div>
<div class="a" style="left:622px;top:981px;width:1px;height:5px;background:#9a9a9a"></div>
<div class="a" style="left:629px;top:981px;width:1px;height:5px;background:#9a9a9a"></div>
<div class="a" style="left:637px;top:981px;width:1px;height:5px;background:#9a9a9a"></div>
<div class="a" style="left:645px;top:981px;width:1px;height:5px;background:#9a9a9a"></div>
<div class="a" style="left:652px;top:981px;width:1px;height:5px;background:#9a9a9a"></div>
<div class="a" style="left:784px;top:805px;width:299px;height:193px;box-sizing:border-box;border:1px solid #ccd1e2;background:#f0f0f0"></div>
<div class="a" style="left:785px;top:806px;width:297px;height:20px;background:#eeeef2"></div>
<div class="t" style="left:789px;top:808.5px;font-size:11.8px;color:#3a3a3a">Position</div>
<svg class="a" style="left:837px;top:814px" width="203" height="5" viewBox="0 0 203 5"><defs><pattern id="gp837_814" x="0" y="0" width="4" height="4" patternUnits="userSpaceOnUse"><rect x="0" y="0" width="1" height="1" fill="#b4b4be"/><rect x="2" y="2" width="1" height="1" fill="#b4b4be"/></pattern></defs><rect x="0" y="0" width="203" height="5" fill="url(#gp837_814)"/></svg>
<svg class="a" style="left:1051px;top:810px" width="9" height="12" viewBox="0 0 9 12"><path d="M2.5 7 V1.5 H6 V7" stroke="#000" stroke-width="1" fill="none"/><rect x="5" y="1" width="2" height="6.5" fill="#000"/><path d="M0.5 7.5 H8" stroke="#000" stroke-width="1.1"/><path d="M4 7.5 V11.5" stroke="#000" stroke-width="1.1"/></svg>
<svg class="a" style="left:1066px;top:812px" width="10" height="9" viewBox="0 0 10 9"><path d="M0.5 0.5 L9.5 8.5 M9.5 0.5 L0.5 8.5" stroke="#000" stroke-width="1.3"/></svg>
<div class="a" style="left:854px;top:833px;width:134px;height:134px;box-sizing:border-box;border:1px solid #d4d4d4"></div>
<div class="a" style="left:921px;top:834px;width:1px;height:132px;background:#d4d4d4"></div>
<div class="a" style="left:855px;top:900px;width:132px;height:1px;background:#d4d4d4"></div>
<div class="a" style="left:914px;top:893px;width:15px;height:15px;border-radius:50%;background:#d4d4d4"></div>
<div class="a" style="left:1002px;top:835px;width:4px;height:130px;background:#a8a8a8"></div>
<div class="a" style="left:1012px;top:840px;width:2px;height:1px;background:#8a8a8a"></div>
<div class="a" style="left:1012px;top:852px;width:2px;height:1px;background:#8a8a8a"></div>
<div class="a" style="left:1012px;top:864px;width:2px;height:1px;background:#8a8a8a"></div>
<div class="a" style="left:1012px;top:876px;width:2px;height:1px;background:#8a8a8a"></div>
<div class="a" style="left:1012px;top:888px;width:2px;height:1px;background:#8a8a8a"></div>
<div class="a" style="left:1012px;top:900px;width:2px;height:1px;background:#8a8a8a"></div>
<div class="a" style="left:1012px;top:912px;width:2px;height:1px;background:#8a8a8a"></div>
<div class="a" style="left:1012px;top:924px;width:2px;height:1px;background:#8a8a8a"></div>
<div class="a" style="left:1012px;top:936px;width:2px;height:1px;background:#8a8a8a"></div>
<div class="a" style="left:1012px;top:948px;width:2px;height:1px;background:#8a8a8a"></div>
<div class="a" style="left:1012px;top:960px;width:2px;height:1px;background:#8a8a8a"></div>
<svg class="a" style="left:996px;top:893px" width="13" height="8" viewBox="0 0 13 8"><path d="M0 0 H9 L13 3.5 L9 7 H0 Z" fill="#808080"/></svg>
<div class="a" style="left:856px;top:981px;width:130px;height:4px;background:#a8a8a8"></div>
<svg class="a" style="left:921px;top:975px" width="7" height="13" viewBox="0 0 7 13"><path d="M0 0 H7 V9 L3.5 13 L0 9 Z" fill="#808080"/></svg>
<div class="a" style="left:861px;top:991px;width:1px;height:2px;background:#8a8a8a"></div>
<div class="a" style="left:873px;top:991px;width:1px;height:2px;background:#8a8a8a"></div>
<div class="a" style="left:885px;top:991px;width:1px;height:2px;background:#8a8a8a"></div>
<div class="a" style="left:897px;top:991px;width:1px;height:2px;background:#8a8a8a"></div>
<div class="a" style="left:909px;top:991px;width:1px;height:2px;background:#8a8a8a"></div>
<div class="a" style="left:921px;top:991px;width:1px;height:2px;background:#8a8a8a"></div>
<div class="a" style="left:933px;top:991px;width:1px;height:2px;background:#8a8a8a"></div>
<div class="a" style="left:945px;top:991px;width:1px;height:2px;background:#8a8a8a"></div>
<div class="a" style="left:957px;top:991px;width:1px;height:2px;background:#8a8a8a"></div>
<div class="a" style="left:969px;top:991px;width:1px;height:2px;background:#8a8a8a"></div>
<div class="a" style="left:981px;top:991px;width:1px;height:2px;background:#8a8a8a"></div>
<div class="a" style="left:1089px;top:805px;width:174px;height:193px;box-sizing:border-box;border:1px solid #ccd1e2;background:#f0f0f0"></div>
<div class="a" style="left:1090px;top:806px;width:172px;height:20px;background:#eeeef2"></div>
<div class="t" style="left:1094px;top:808.5px;font-size:11.6px;color:#3a3a3a">Gobo</div>
<svg class="a" style="left:1128px;top:814px" width="92" height="5" viewBox="0 0 92 5"><defs><pattern id="gp1128_814" x="0" y="0" width="4" height="4" patternUnits="userSpaceOnUse"><rect x="0" y="0" width="1" height="1" fill="#b4b4be"/><rect x="2" y="2" width="1" height="1" fill="#b4b4be"/></pattern></defs><rect x="0" y="0" width="92" height="5" fill="url(#gp1128_814)"/></svg>
<svg class="a" style="left:1231px;top:810px" width="9" height="12" viewBox="0 0 9 12"><path d="M2.5 7 V1.5 H6 V7" stroke="#000" stroke-width="1" fill="none"/><rect x="5" y="1" width="2" height="6.5" fill="#000"/><path d="M0.5 7.5 H8" stroke="#000" stroke-width="1.1"/><path d="M4 7.5 V11.5" stroke="#000" stroke-width="1.1"/></svg>
<svg class="a" style="left:1246px;top:812px" width="10" height="9" viewBox="0 0 10 9"><path d="M0.5 0.5 L9.5 8.5 M9.5 0.5 L0.5 8.5" stroke="#000" stroke-width="1.3"/></svg>
<div class="a" style="left:1090px;top:850px;width:172px;height:1px;background:#a0a0a0"></div>
<div class="a" style="left:1092px;top:829px;width:56px;height:22px;background:#f0f0f0;box-sizing:border-box;border:1px solid #a0a0a0;border-bottom:0"></div>
<div class="t c" style="left:1092.0px;top:832px;width:56px;color:#a0a0a0">Gobos</div>
<div class="t" style="left:1097px;top:944px;color:#a0a0a0">Rotation</div>
<div class="a" style="left:1154px;top:951px;width:97px;height:4px;background:#a8a8a8"></div>
<div class="a" style="left:1197px;top:942px;width:10px;height:18px;background:#808080"></div>
<div class="t" style="left:1106px;top:972px;color:#a0a0a0">Index</div>
<div class="a" style="left:1149px;top:979px;width:102px;height:4px;background:#a8a8a8"></div>
<div class="a" style="left:1149px;top:970px;width:10px;height:18px;background:#808080"></div>
<div class="a" style="left:1269px;top:805px;width:162px;height:193px;box-sizing:border-box;border:1px solid #ccd1e2;background:#f0f0f0"></div>
<div class="a" style="left:1270px;top:806px;width:160px;height:20px;background:#eeeef2"></div>
<div class="t" style="left:1274px;top:808.5px;font-size:11.93px;color:#3a3a3a">Lichtstrahl</div>
<svg class="a" style="left:1334px;top:814px" width="54" height="5" viewBox="0 0 54 5"><defs><pattern id="gp1334_814" x="0" y="0" width="4" height="4" patternUnits="userSpaceOnUse"><rect x="0" y="0" width="1" height="1" fill="#b4b4be"/><rect x="2" y="2" width="1" height="1" fill="#b4b4be"/></pattern></defs><rect x="0" y="0" width="54" height="5" fill="url(#gp1334_814)"/></svg>
<svg class="a" style="left:1399px;top:810px" width="9" height="12" viewBox="0 0 9 12"><path d="M2.5 7 V1.5 H6 V7" stroke="#000" stroke-width="1" fill="none"/><rect x="5" y="1" width="2" height="6.5" fill="#000"/><path d="M0.5 7.5 H8" stroke="#000" stroke-width="1.1"/><path d="M4 7.5 V11.5" stroke="#000" stroke-width="1.1"/></svg>
<svg class="a" style="left:1414px;top:812px" width="10" height="9" viewBox="0 0 10 9"><path d="M0.5 0.5 L9.5 8.5 M9.5 0.5 L0.5 8.5" stroke="#000" stroke-width="1.3"/></svg>
<div class="t c" style="left:1269.0px;top:841px;width:50px;color:#a0a0a0">Zoom</div>
<div class="a" style="left:1327px;top:848px;width:96px;height:4px;background:#a8a8a8"></div>
<div class="a" style="left:1317px;top:832px;width:10px;height:32px;background:#808080"></div>
<div class="t c" style="left:1269.0px;top:883px;width:50px;color:#a0a0a0">Fokus</div>
<div class="a" style="left:1327px;top:890px;width:96px;height:4px;background:#a8a8a8"></div>
<div class="a" style="left:1317px;top:874px;width:10px;height:32px;background:#808080"></div>
<div class="t c" style="left:1269.0px;top:925px;width:50px;color:#a0a0a0">Iris</div>
<div class="a" style="left:1327px;top:932px;width:96px;height:4px;background:#a8a8a8"></div>
<div class="a" style="left:1317px;top:916px;width:10px;height:32px;background:#808080"></div>
<div class="t c" style="left:1269.0px;top:967px;width:50px;color:#a0a0a0">Frost</div>
<div class="a" style="left:1327px;top:974px;width:96px;height:4px;background:#a8a8a8"></div>
<div class="a" style="left:1317px;top:958px;width:10px;height:34px;background:#808080"></div>
<div class="a" style="left:1437px;top:805px;width:477px;height:193px;box-sizing:border-box;border:1px solid #ccd1e2;background:#f0f0f0"></div>
<div class="a" style="left:1438px;top:806px;width:475px;height:20px;background:#eeeef2"></div>
<div class="t" style="left:1442px;top:808.5px;font-size:11.73px;color:#3a3a3a">Effekte und Filter</div>
<svg class="a" style="left:1536px;top:814px" width="337" height="5" viewBox="0 0 337 5"><defs><pattern id="gp1536_814" x="0" y="0" width="4" height="4" patternUnits="userSpaceOnUse"><rect x="0" y="0" width="1" height="1" fill="#b4b4be"/><rect x="2" y="2" width="1" height="1" fill="#b4b4be"/></pattern></defs><rect x="0" y="0" width="337" height="5" fill="url(#gp1536_814)"/></svg>
<svg class="a" style="left:1882px;top:810px" width="9" height="12" viewBox="0 0 9 12"><path d="M2.5 7 V1.5 H6 V7" stroke="#000" stroke-width="1" fill="none"/><rect x="5" y="1" width="2" height="6.5" fill="#000"/><path d="M0.5 7.5 H8" stroke="#000" stroke-width="1.1"/><path d="M4 7.5 V11.5" stroke="#000" stroke-width="1.1"/></svg>
<svg class="a" style="left:1897px;top:812px" width="10" height="9" viewBox="0 0 10 9"><path d="M0.5 0.5 L9.5 8.5 M9.5 0.5 L0.5 8.5" stroke="#000" stroke-width="1.3"/></svg>
<div class="a" style="left:1441px;top:827px;width:329px;height:38px;background:#f7f7f7;border-radius:0 4px 4px 0"></div>
<div class="a" style="left:1444px;top:832px;width:2px;height:2px;background:#a0a0a0"></div>
<div class="a" style="left:1444px;top:836px;width:2px;height:2px;background:#a0a0a0"></div>
<div class="a" style="left:1444px;top:840px;width:2px;height:2px;background:#a0a0a0"></div>
<div class="a" style="left:1444px;top:844px;width:2px;height:2px;background:#a0a0a0"></div>
<div class="a" style="left:1444px;top:848px;width:2px;height:2px;background:#a0a0a0"></div>
<div class="a" style="left:1444px;top:852px;width:2px;height:2px;background:#a0a0a0"></div>
<div class="a" style="left:1444px;top:856px;width:2px;height:2px;background:#a0a0a0"></div>
<svg class="a" style="left:1482px;top:830px" width="14" height="16" viewBox="0 0 14 16"><rect x="0.5" y="1.5" width="13" height="14" rx="1" fill="#d8d8d8" stroke="#a8a8a8" stroke-width="1"/><rect x="4" y="0" width="6" height="3" fill="#b8b8b8"/><path d="M4 6 L6 8 L10 4 M4 11 H10" stroke="#a0a0a0" stroke-width="1" fill="none"/></svg>
<div class="t" style="left:1457px;top:847px;color:#8a8a8a">Bearbeiten</div>
<svg class="a" style="left:1565px;top:830px" width="16" height="16" viewBox="0 0 16 16"><path d="M1 1 L11 1 L15 4 L15 15 L5 15 L1 11 Z" fill="#d4d4d4" stroke="#a8a8a8" stroke-width="1"/><path d="M4 4 L9 9" stroke="#9a9a9a" stroke-width="1.5"/></svg>
<div class="t" style="left:1535px;top:847px;color:#8a8a8a">Umbenennen</div>
<svg class="a" style="left:1643px;top:830px" width="17" height="16" viewBox="0 0 17 16"><path d="M2 2 L15 14 M15 2 L2 14" stroke="#9a9a9a" stroke-width="4"/></svg>
<div class="t" style="left:1627px;top:847px;color:#8a8a8a">Löschen</div>
<svg class="a" style="left:1711px;top:834px" width="16" height="12" viewBox="0 0 16 12"><path d="M1 5 C3 1 10 0 15 3 L13 8 L8 8 L5 11 L5 8 L2 8 Z" fill="#b8b8b8" stroke="#a0a0a0" stroke-width="0.8"/></svg>
<div class="t" style="left:1690px;top:847px;color:#8a8a8a">Anwenden</div>
<svg class="a" style="left:1759px;top:845px" width="6" height="4" viewBox="0 0 6 4"><path d="M0 0 L6 0 L3 3.5 Z" fill="#000"/></svg>
<div class="a" style="left:1438px;top:889px;width:475px;height:1px;background:#a0a0a0"></div>
<div class="a" style="left:1440px;top:868px;width:56px;height:22px;background:#f0f0f0;box-sizing:border-box;border:1px solid #a0a0a0;border-bottom:0"></div>
<div class="t" style="left:1449px;top:871px;letter-spacing:0.5px">Effect</div>
<div class="t" style="left:1502px;top:871px;letter-spacing:0.33px">Matrix Effect</div>
<div class="t" style="left:1595px;top:871px;letter-spacing:0.35px">Radix Effect</div>
<div class="t" style="left:1685px;top:871px;letter-spacing:0.16px">Saved</div>
<div class="a" style="left:1445px;top:894px;width:461px;height:97px;box-sizing:border-box;border:1px solid #6a6a6a;background:#fff"></div>
<div class="a" style="left:1888px;top:896px;width:17px;height:93px;background:#f0f0f0"></div>
<div class="a" style="left:1894px;top:913px;width:3px;height:17px;background:#808080"></div>
<div class="t" style="left:1459px;top:897.5px;font-size:11.4px;color:#2a3ac0">Effect 1D</div>
<div class="a" style="left:1510px;top:905px;width:367px;height:1px;background:#a8c0e0"></div>
<svg class="a" style="left:1487px;top:920px" width="26" height="23" viewBox="0 0 26 23"><path d="M1 22 C3 10 5 1 8 1 C11 1 12 10 13 20 C14 10 15 1 18 1 C21 1 23 10 25 19" stroke="#111" stroke-width="1.2" fill="none"/></svg>
<svg class="a" style="left:1594px;top:920px" width="26" height="23" viewBox="0 0 26 23"><path d="M1 22 V2 Q1 1 3 1 H5 Q7 1 7 3 V21 Q7 22 9 22 H10 Q12 22 12 20 V3 Q12 1 14 1 H16 Q18 1 18 3 V20 Q18 22 21 22 H25" stroke="#111" stroke-width="1.2" fill="none"/></svg>
<svg class="a" style="left:1701px;top:920px" width="27" height="23" viewBox="0 0 27 23"><path d="M0.5 19 L2 18 L3 20 L4.5 17.5 L6 21 L7.5 1 L9 21 L10 18 L11 19.5 L12 17 L13 20 L14 17.5 L15 19.5 L16 17 L17 20 L18 18 L19 21 L20.5 1 L22 21 L23.5 17.5 L24.5 20 L26 18" stroke="#111" stroke-width="1" fill="none"/></svg>
<svg class="a" style="left:1808px;top:920px" width="26" height="23" viewBox="0 0 26 23"><path d="M1 1 C3 1 4 5 5 12 C6 19 7 22 9 22 C11 22 12 17 12.5 11 C13 5 13.5 1 15 1 C17 1 18 5 19 12 C20 19 21 22 25 22" stroke="#111" stroke-width="1.2" fill="none"/></svg>
<div class="t c" style="left:1455.0px;top:947px;width:90px;">Bump</div>
<div class="t c" style="left:1562.0px;top:947px;width:90px;">Capacitor</div>
<div class="t c" style="left:1662.5px;top:947px;width:100px;">Cardinalsinus</div>
<div class="t c" style="left:1775.0px;top:947px;width:90px;">Pows</div>
<svg class="a" style="left:1820px;top:1011px" width="15" height="16" viewBox="0 0 15 16"><path d="M1 2 L10 0.5 L12 2 L12 15.5 L3 16 L1 14 Z" fill="#8aa0b4" stroke="#4a5a6a" stroke-width="0.8"/><path d="M3 4 H10" stroke="#dde" stroke-width="1"/><rect x="11" y="3" width="3" height="4" fill="#40b0e0"/><rect x="11" y="8" width="3" height="4" fill="#f0d020"/><rect x="11" y="12" width="3" height="3" fill="#c040c0"/></svg>
<svg class="a" style="left:1842px;top:1012px" width="17" height="16" viewBox="0 0 17 16"><path d="M1 9 L8 2 L15 2 L15 8 L9 14 Z" fill="#4a5058" stroke="#222" stroke-width="0.8"/><circle cx="8" cy="8" r="3.2" fill="#dfe6ec" stroke="#333" stroke-width="1"/><path d="M10.5 10.5 L15 15" stroke="#c08a2a" stroke-width="2"/></svg>
<svg class="a" style="left:1867px;top:1011px" width="16" height="16" viewBox="0 0 16 16"><rect x="1" y="1" width="11" height="14" rx="1" fill="#8aa4c0" stroke="#4a5a6a" stroke-width="0.8"/><path d="M3 4 H10 M3 6 H10 M3 8 H8" stroke="#40a0e0" stroke-width="1"/><circle cx="11" cy="11.5" r="4.5" fill="#2aa83a"/><path d="M8.5 11.5 L10.5 13.5 L13.5 9.5" stroke="#fff" stroke-width="1.4" fill="none"/></svg>
<div class="t" style="left:1884px;top:1012px;">(3)</div>
</body></html>
